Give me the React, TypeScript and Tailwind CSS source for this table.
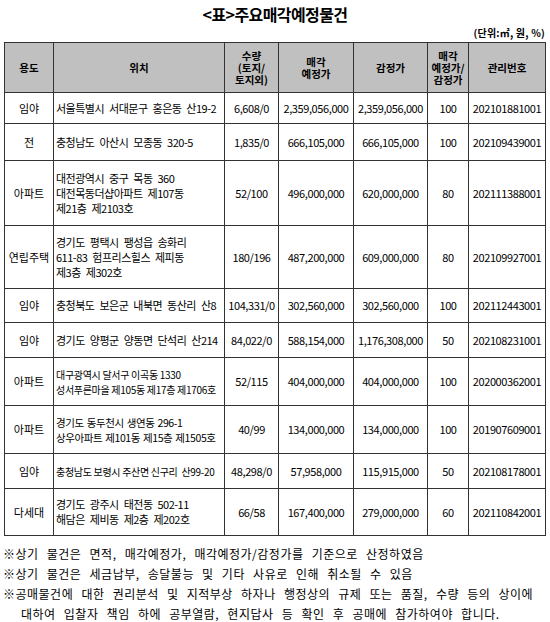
import React from "react";

type Row = {
  use: string;
  loc: string[];
  qty: string;
  sale: string;
  appr: string;
  ratio: string;
  id: string;
  h: string;
  locCls: string;
};

const normal = "text-[11px] tracking-[-0.5px] [word-spacing:3px]";
const tight = "text-[10px] tracking-[-0.3px] [word-spacing:0px]";
const mid = "text-[10.5px] tracking-[-0.4px] [word-spacing:1px]";

const rows: Row[] = [
  { use: "임야", loc: ["서울특별시 서대문구 홍은동 산19-2"], qty: "6,608/0", sale: "2,359,056,000", appr: "2,359,056,000", ratio: "100", id: "202101881001", h: "h-[31px]", locCls: normal },
  { use: "전", loc: ["충청남도 아산시 모종동 320-5"], qty: "1,835/0", sale: "666,105,000", appr: "666,105,000", ratio: "100", id: "202109439001", h: "h-[37px]", locCls: normal },
  { use: "아파트", loc: ["대전광역시 중구 목동 360", "대전목동더샵아파트 제107동", "제21층 제2103호"], qty: "52/100", sale: "496,000,000", appr: "620,000,000", ratio: "80", id: "202111388001", h: "h-[65px]", locCls: normal },
  { use: "연립주택", loc: ["경기도 평택시 팽성읍 송화리", "611-83 험프리스힐스 제피동", "제3층 제302호"], qty: "180/196", sale: "487,200,000", appr: "609,000,000", ratio: "80", id: "202109927001", h: "h-[63px]", locCls: normal },
  { use: "임야", loc: ["충청북도 보은군 내북면 동산리 산8"], qty: "104,331/0", sale: "302,560,000", appr: "302,560,000", ratio: "100", id: "202112443001", h: "h-[34px]", locCls: normal },
  { use: "임야", loc: ["경기도 양평군 양동면 단석리 산214"], qty: "84,022/0", sale: "588,154,000", appr: "1,176,308,000", ratio: "50", id: "202108231001", h: "h-[35px]", locCls: normal },
  { use: "아파트", loc: ["대구광역시 달서구 이곡동 1330", "성서푸른마을 제105동 제17층 제1706호"], qty: "52/115", sale: "404,000,000", appr: "404,000,000", ratio: "100", id: "202000362001", h: "h-[48px]", locCls: tight },
  { use: "아파트", loc: ["경기도 동두천시 생연동 296-1", "상우아파트 제101동 제15층 제1505호"], qty: "40/99", sale: "134,000,000", appr: "134,000,000", ratio: "100", id: "201907609001", h: "h-[48px]", locCls: mid },
  { use: "임야", loc: ["충청남도 보령시 주산면 신구리  산99-20"], qty: "48,298/0", sale: "57,958,000", appr: "115,915,000", ratio: "50", id: "202108178001", h: "h-[35px]", locCls: tight },
  { use: "다세대", loc: ["경기도 광주시 태전동 502-11", "해담은 제비동 제2층 제202호"], qty: "66/58", sale: "167,400,000", appr: "279,000,000", ratio: "60", id: "202110842001", h: "h-[47px]", locCls: normal },
];

const font = "font-['Noto_Sans_CJK_KR','Noto_Sans',sans-serif]";

export default function App() {
  const th = "border border-[#333] bg-[#c0c0c0] font-bold text-[10.5px] leading-[12px] text-black text-center align-middle p-0";
  const tdBase = "border border-[#333] text-black align-middle p-0 whitespace-nowrap overflow-hidden";
  const td = `${tdBase} text-[11px]`;
  const num = "text-center tracking-[-0.4px]";
  return (
    <div className={`w-[550px] h-[622px] bg-white ${font} text-black overflow-hidden`}>
      <div className="h-[26px] flex items-center justify-center text-[16px] font-bold tracking-[-0.6px] pt-[1px]">
        &lt;표&gt;주요매각예정물건
      </div>
      <div className="h-[16px] flex items-start justify-end pr-[5px] text-[10px] font-bold leading-[14px] tracking-[0.2px]">
        (단위:㎡, 원, %)
      </div>
      <table className="ml-[4px] w-[541px] table-fixed border-collapse border-[1.5px] border-black">
        <colgroup>
          <col className="w-[49px]" />
          <col className="w-[171px]" />
          <col className="w-[54px]" />
          <col className="w-[75px]" />
          <col className="w-[74px]" />
          <col className="w-[41px]" />
          <col className="w-[77px]" />
        </colgroup>
        <thead>
          <tr className="h-[50px]">
            <th className={th}>용도</th>
            <th className={th}>위치</th>
            <th className={th}>수량<br />(토지/<br />토지외)</th>
            <th className={th}>매각<br />예정가</th>
            <th className={th}>감정가</th>
            <th className={th}>매각<br />예정가/<br />감정가</th>
            <th className={th}>관리번호</th>
          </tr>
        </thead>
        <tbody>
          {rows.map((r, i) => (
            <tr key={i} className={r.h}>
              <td className={`${td} text-center`}>{r.use}</td>
              <td className={`${tdBase} text-left pl-[2px]`}>
                {r.loc.map((l, j) => (
                  <div key={j} className={`whitespace-pre leading-[15px] ${r.locCls}`}>{l}</div>
                ))}
              </td>
              <td className={`${td} ${num}`}>{r.qty}</td>
              <td className={`${td} ${num}`}>{r.sale}</td>
              <td className={`${td} ${num}`}>{r.appr}</td>
              <td className={`${td} ${num}`}>{r.ratio}</td>
              <td className={`${td} ${num}`}>{r.id}</td>
            </tr>
          ))}
        </tbody>
      </table>
      <div className="mt-[8px] pl-[3px] text-[12px] leading-[20px] [word-spacing:5px] tracking-[0.5px]">
        <div>※상기 물건은 면적, 매각예정가, 매각예정가/감정가를 기준으로 산정하였음</div>
        <div>※상기 물건은 세금납부, 송달불능 및 기타 사유로 인해 취소될 수 있음</div>
        <div className="whitespace-nowrap">※공매물건에 대한 권리분석 및 지적부상 하자나 행정상의 규제 또는 품질, 수량 등의 상이에</div>
        <div className="pl-[18px] whitespace-nowrap">대하여 입찰자 책임 하에 공부열람, 현지답사 등 확인 후 공매에 참가하여야 합니다.</div>
      </div>
    </div>
  );
}
